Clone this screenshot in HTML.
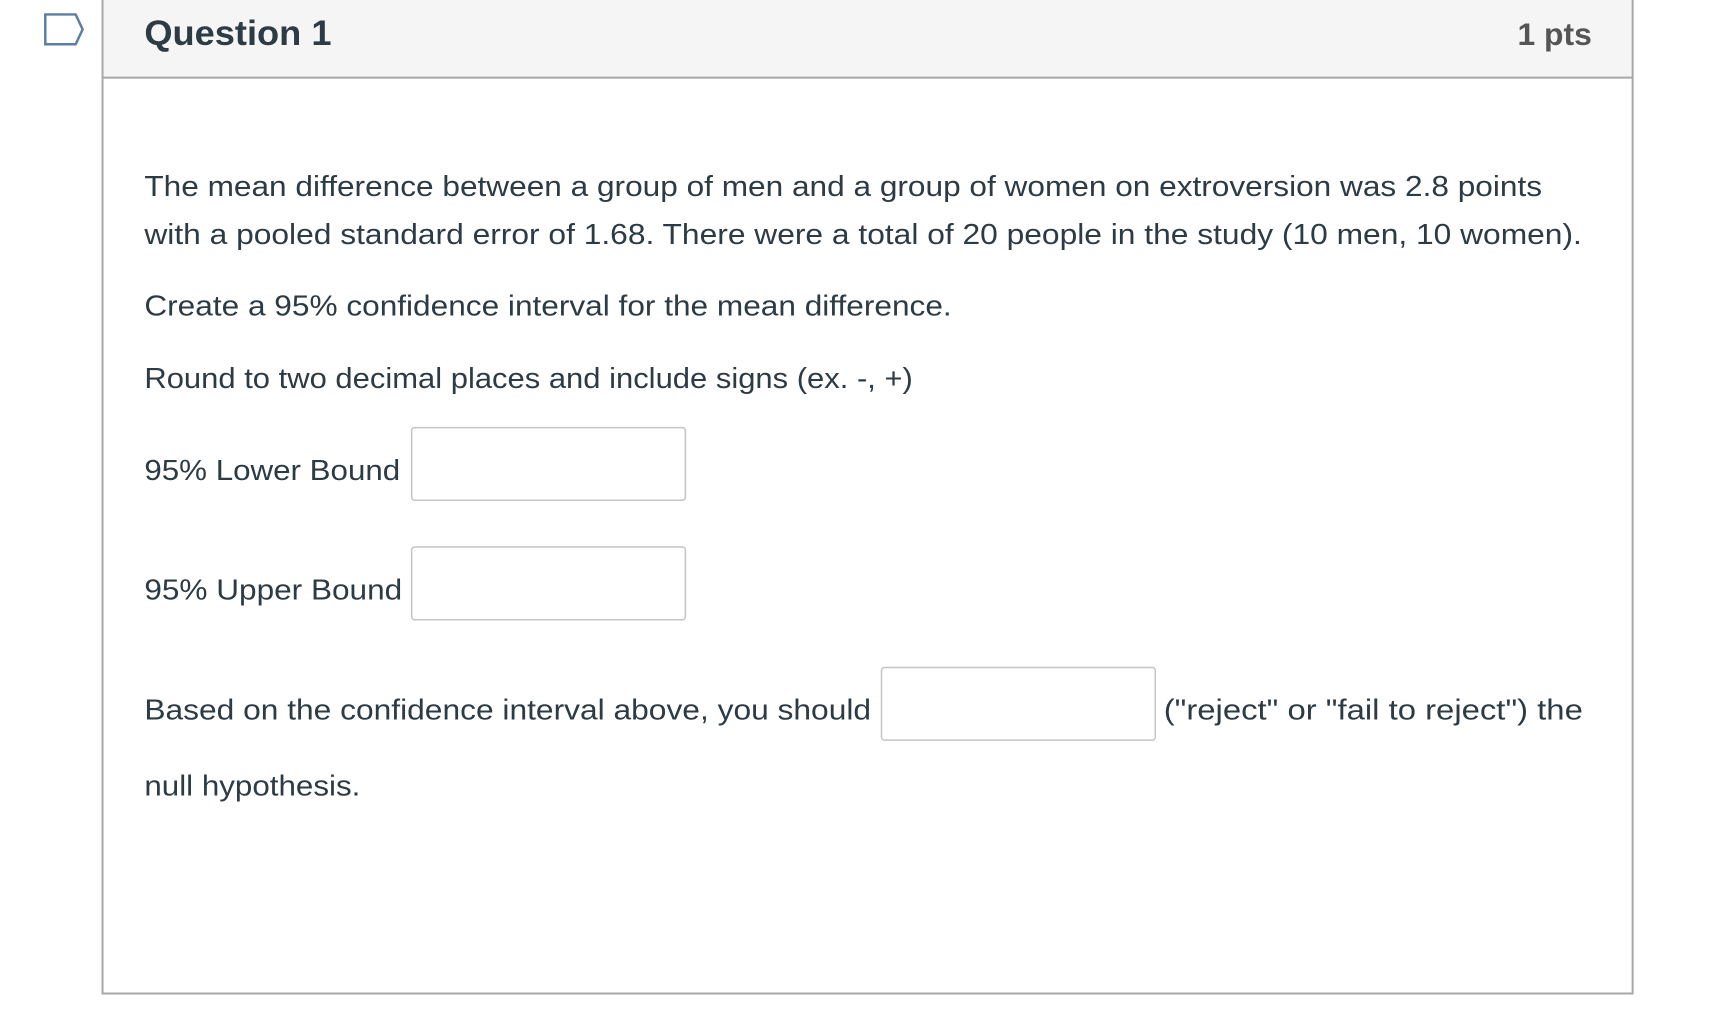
<!DOCTYPE html>
<html><head><meta charset="utf-8"><style>
html,body{margin:0;padding:0;background:#fff;width:1724px;height:1026px;overflow:hidden}
svg{display:block}
text{font-family:"Liberation Sans",sans-serif;fill:#2d3b45}
</style></head><body>
<svg width="1724" height="1026" viewBox="0 0 1724 1026" xmlns="http://www.w3.org/2000/svg">
<g transform="scale(0.9955)">
<path d="M45.5 14.5 H76 L83 29.5 L76 44.5 H45.5 Z" fill="#fff" stroke="#5b7fa3" stroke-width="2.5" stroke-linejoin="miter"/>
<rect x="103" y="-2" width="1537" height="80" fill="#f5f5f5"/>
<rect x="103" y="-2" width="1537" height="1000" fill="none" stroke="#a8a8a8" stroke-width="2"/>
<line x1="103" y1="78" x2="1640" y2="78" stroke="#a8a8a8" stroke-width="2"/>
<text x="145" y="45" font-size="35" font-weight="bold" textLength="188" lengthAdjust="spacingAndGlyphs">Question 1</text>
<text x="1599" y="45" font-size="32" font-weight="bold" text-anchor="end" style="fill:#555">1 pts</text>
<g font-size="29">
<text x="145" y="197" textLength="1404" lengthAdjust="spacingAndGlyphs">The mean difference between a group of men and a group of women on extroversion was 2.8 points</text>
<text x="145" y="245" textLength="1444" lengthAdjust="spacingAndGlyphs">with a pooled standard error of 1.68. There were a total of 20 people in the study (10 men, 10 women).</text>
<text x="145" y="317" textLength="811" lengthAdjust="spacingAndGlyphs">Create a 95% confidence interval for the mean difference.</text>
<text x="145" y="390" textLength="772" lengthAdjust="spacingAndGlyphs">Round to two decimal places and include signs (ex. -, +)</text>
<text x="145" y="482" textLength="257" lengthAdjust="spacingAndGlyphs">95% Lower Bound</text>
<text x="145" y="602" textLength="259" lengthAdjust="spacingAndGlyphs">95% Upper Bound</text>
<text x="145" y="723" textLength="730" lengthAdjust="spacingAndGlyphs">Based on the confidence interval above,  you should</text>
<text x="1169" y="723" textLength="421" lengthAdjust="spacingAndGlyphs">("reject" or "fail to reject")  the</text>
<text x="145" y="799" textLength="217" lengthAdjust="spacingAndGlyphs">null hypothesis.</text>
</g>
<rect x="413.5" y="429.5" width="275" height="73" rx="3" fill="#fff" stroke="#c4c4c4" stroke-width="1.5"/>
<rect x="413.5" y="549.5" width="275" height="73" rx="3" fill="#fff" stroke="#c4c4c4" stroke-width="1.5"/>
<rect x="885.5" y="670.5" width="275" height="73" rx="3" fill="#fff" stroke="#c4c4c4" stroke-width="1.5"/>
</g>
</svg>
</body></html>
